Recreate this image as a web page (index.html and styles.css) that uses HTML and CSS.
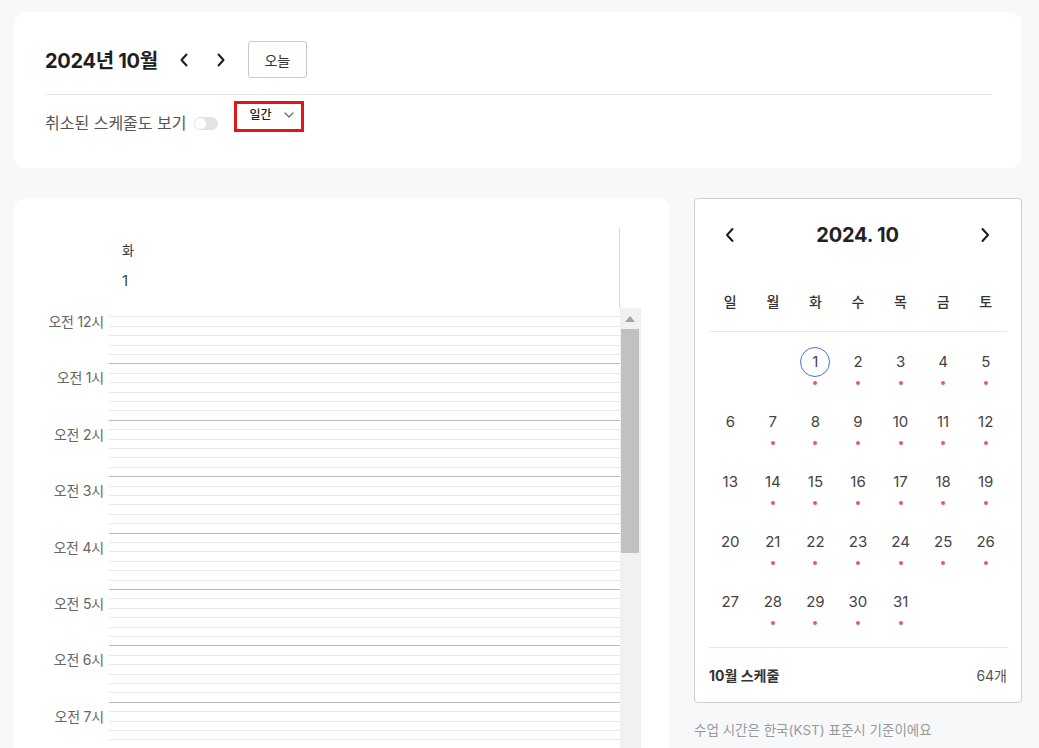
FILE: index.html
```html
<!DOCTYPE html>
<html lang="ko">
<head>
<meta charset="utf-8">
<link rel="stylesheet" href="styles.css">
</head>
<body>
<div class="page">
  <section class="topcard">
    <div class="title-row">
      <h1 class="title">2024년 10월</h1>
      <button class="chev chev-first"><svg width="10" height="14" viewBox="0 0 10 14"><path d="M7.5 1.5 L2.5 7 L7.5 12.5" fill="none" stroke="#1c1c1c" stroke-width="2" stroke-linecap="round" stroke-linejoin="round"/></svg></button>
      <button class="chev"><svg width="10" height="14" viewBox="0 0 10 14"><path d="M2.5 1.5 L7.5 7 L2.5 12.5" fill="none" stroke="#1c1c1c" stroke-width="2" stroke-linecap="round" stroke-linejoin="round"/></svg></button>
      <button class="today">오늘</button>
    </div>
    <div class="filter-row">
      <span class="cancel-label">취소된 스케줄도 보기</span>
      <span class="toggle"><span class="knob"></span></span>
      <div class="view-select">
        <span>일간</span>
        <svg width="10" height="6" viewBox="0 0 10 6"><path d="M1 1 L5 5 L9 1" fill="none" stroke="#666" stroke-width="1.2" stroke-linecap="round" stroke-linejoin="round"/></svg>
      </div>
    </div>
  </section>

  <div class="main">
    <section class="daycard">
      <div class="day-head">
        <div class="gutter"></div>
        <div class="day-col">
          <div class="dow">화</div>
          <div class="dnum">1</div>
        </div>
      </div>
      <div class="day-body">
        <div class="timeline">
          <div class="hour"><div class="hlabel">오전 12시</div><div class="slots"><i></i><i></i><i></i><i></i><i></i><i></i></div></div>
          <div class="hour"><div class="hlabel">오전 1시</div><div class="slots"><i></i><i></i><i></i><i></i><i></i><i></i></div></div>
          <div class="hour"><div class="hlabel">오전 2시</div><div class="slots"><i></i><i></i><i></i><i></i><i></i><i></i></div></div>
          <div class="hour"><div class="hlabel">오전 3시</div><div class="slots"><i></i><i></i><i></i><i></i><i></i><i></i></div></div>
          <div class="hour"><div class="hlabel">오전 4시</div><div class="slots"><i></i><i></i><i></i><i></i><i></i><i></i></div></div>
          <div class="hour"><div class="hlabel">오전 5시</div><div class="slots"><i></i><i></i><i></i><i></i><i></i><i></i></div></div>
          <div class="hour"><div class="hlabel">오전 6시</div><div class="slots"><i></i><i></i><i></i><i></i><i></i><i></i></div></div>
          <div class="hour"><div class="hlabel">오전 7시</div><div class="slots"><i></i><i></i><i></i><i></i><i></i><i></i></div></div>
        </div>
        <div class="sbar">
          <div class="sbar-up"><svg width="10" height="6" viewBox="0 0 10 6"><path d="M0 6 L5 0 L10 6 Z" fill="#a3a3a3"/></svg></div>
          <div class="sbar-thumb"></div>
        </div>
      </div>
    </section>

    <aside class="side">
      <section class="calcard">
        <div class="cal-head">
          <svg width="12" height="16" viewBox="0 0 12 16"><path d="M8.5 2 L3 8 L8.5 14" fill="none" stroke="#1c1c1c" stroke-width="2" stroke-linecap="round" stroke-linejoin="round"/></svg>
          <div class="cal-title">2024. 10</div>
          <svg width="12" height="16" viewBox="0 0 12 16"><path d="M3.5 2 L9 8 L3.5 14" fill="none" stroke="#1c1c1c" stroke-width="2" stroke-linecap="round" stroke-linejoin="round"/></svg>
        </div>
        <div class="weekdays">
          <span>일</span><span>월</span><span>화</span><span>수</span><span>목</span><span>금</span><span>토</span>
        </div>
        <div class="days">
          <div class="cell"></div><div class="cell"></div>
          <div class="cell"><span class="n today-n">1</span><b class="dot"></b></div>
          <div class="cell"><span class="n">2</span><b class="dot"></b></div>
          <div class="cell"><span class="n">3</span><b class="dot"></b></div>
          <div class="cell"><span class="n">4</span><b class="dot"></b></div>
          <div class="cell"><span class="n">5</span><b class="dot"></b></div>
          <div class="cell"><span class="n">6</span></div>
          <div class="cell"><span class="n">7</span><b class="dot"></b></div>
          <div class="cell"><span class="n">8</span><b class="dot"></b></div>
          <div class="cell"><span class="n">9</span><b class="dot"></b></div>
          <div class="cell"><span class="n">10</span><b class="dot"></b></div>
          <div class="cell"><span class="n">11</span><b class="dot"></b></div>
          <div class="cell"><span class="n">12</span><b class="dot"></b></div>
          <div class="cell"><span class="n">13</span></div>
          <div class="cell"><span class="n">14</span><b class="dot"></b></div>
          <div class="cell"><span class="n">15</span><b class="dot"></b></div>
          <div class="cell"><span class="n">16</span><b class="dot"></b></div>
          <div class="cell"><span class="n">17</span><b class="dot"></b></div>
          <div class="cell"><span class="n">18</span><b class="dot"></b></div>
          <div class="cell"><span class="n">19</span><b class="dot"></b></div>
          <div class="cell"><span class="n">20</span></div>
          <div class="cell"><span class="n">21</span><b class="dot"></b></div>
          <div class="cell"><span class="n">22</span><b class="dot"></b></div>
          <div class="cell"><span class="n">23</span><b class="dot"></b></div>
          <div class="cell"><span class="n">24</span><b class="dot"></b></div>
          <div class="cell"><span class="n">25</span><b class="dot"></b></div>
          <div class="cell"><span class="n">26</span><b class="dot"></b></div>
          <div class="cell"><span class="n">27</span></div>
          <div class="cell"><span class="n">28</span><b class="dot"></b></div>
          <div class="cell"><span class="n">29</span><b class="dot"></b></div>
          <div class="cell"><span class="n">30</span><b class="dot"></b></div>
          <div class="cell"><span class="n">31</span><b class="dot"></b></div>
        </div>
        <div class="cal-foot">
          <span class="foot-l">10월 스케줄</span>
          <span class="foot-r">64개</span>
        </div>
      </section>
      <p class="note">수업 시간은 한국(KST) 표준시 기준이에요</p>
    </aside>
  </div>
</div>
</body>
</html>
```

FILE: styles.css
```css
* { box-sizing: border-box; }
html, body { margin: 0; padding: 0; }
body {
  background: #f7f8fa;
  font-family: Inter, "Noto Sans CJK KR", sans-serif;
  color: #222;
  overflow: hidden;
}
.page {
  height: 748px;
  overflow: hidden;
  padding: 12px 17px 0 14px;
}
button { font-family: inherit; }

.topcard {
  background: #fff;
  border-radius: 12px;
  height: 156px;
  padding: 29px 30px 0 31px;
}
.title-row {
  display: flex;
  align-items: center;
  height: 37px;
}
.title {
  margin: 0;
  font-size: 20px;
  font-weight: 700;
  letter-spacing: -0.3px;
  color: #1f1f1f;
}
.chev {
  width: 24px;
  height: 24px;
  border: 0;
  background: none;
  padding: 0;
  display: flex;
  align-items: center;
  justify-content: center;
  margin-left: 13px;
}
.chev-first { margin-left: 14px; }
.today {
  margin-left: 15px;
  width: 59px;
  height: 37px;
  border: 1px solid #c9c9c9;
  border-radius: 3px;
  background: #fff;
  font-size: 14px;
  color: #333;
}
.filter-row {
  margin-top: 16px;
  border-top: 1px solid #e6e6e6;
  padding-top: 6px;
  display: flex;
  align-items: flex-start;
}
.cancel-label {
  font-size: 16px;
  color: #555;
  line-height: 22px;
  margin-top: 11px;
}
.toggle {
  width: 24px;
  height: 13px;
  border-radius: 7px;
  background: #e3e3e3;
  margin-left: 8px;
  margin-top: 16px;
  display: flex;
  align-items: center;
  padding-left: 1px;
}
.knob {
  width: 11px;
  height: 11px;
  border-radius: 50%;
  background: #fff;
}
.view-select {
  margin-left: 16px;
  width: 70px;
  height: 31px;
  border: 3px solid #e4141b;
  display: flex;
  align-items: center;
  padding-left: 12px;
  gap: 12px;
  font-size: 12px;
  font-weight: 500;
  color: #222;
}
.view-select span { line-height: 14px; margin-top: -4px; }
.view-select svg { margin-top: -3px; }

.main {
  margin-top: 30px;
  display: flex;
  gap: 24px;
  align-items: flex-start;
}
.daycard {
  width: 656px;
  height: 600px;
  background: #fff;
  border-radius: 12px;
  padding: 30px 29px 0 0;
}
.day-head {
  display: flex;
  height: 80px;
}
.gutter { width: 95px; }
.day-col {
  width: 511px;
  border-right: 1px solid #d8d8d8;
  padding: 13px 0 0 13px;
}
.dow { font-size: 13px; color: #333; line-height: 18px; }
.dnum { font-size: 15px; color: #444; line-height: 20px; margin-top: 12px; }
.day-body {
  display: flex;
}
.timeline { width: 606px; }
.hour {
  display: flex;
  height: 56.4px;
}
.hlabel {
  width: 95px;
  text-align: right;
  padding: 6px 5px 0 0;
  font-size: 14px;
  line-height: 16px;
  color: #666;
  letter-spacing: -0.2px;
}
.slots { width: 511px; display: flex; flex-direction: column; }
.slots i {
  display: block;
  height: 9.4px;
  border-bottom: 1px solid #e8e8e8;
}
.slots i:last-child { border-bottom-color: #b9b9b9; }
.sbar {
  width: 21px;
  background: #f1f1f1;
  padding: 0 2px 0 1px;
  height: 460px;
}
.sbar-up {
  height: 21px;
  display: flex;
  align-items: center;
  justify-content: center;
}
.sbar-thumb {
  height: 224px;
  background: #c1c1c1;
}

.side { width: 328px; }
.calcard {
  background: #fff;
  border: 1px solid #cfcfcf;
  border-radius: 4px;
  padding: 0 14px;
}
.cal-head {
  height: 71px;
  display: flex;
  align-items: center;
  justify-content: space-between;
  padding: 0 16px 0 15px;
}
.cal-title {
  font-size: 20px;
  font-weight: 700;
  color: #222;
  letter-spacing: -0.2px;
}
.weekdays {
  height: 62px;
  display: grid;
  grid-template-columns: repeat(7, 1fr);
  align-items: center;
  text-align: center;
  border-bottom: 1px solid #e6e6e6;
  font-size: 14px;
  font-weight: 500;
  color: #333;
}
.days {
  display: grid;
  grid-template-columns: repeat(7, 1fr);
  grid-auto-rows: 60px;
  padding-bottom: 15px;
  border-bottom: 1px solid #e6e6e6;
}
.cell {
  display: flex;
  flex-direction: column;
  align-items: center;
  padding-top: 15px;
}
.n {
  width: 30px;
  height: 30px;
  line-height: 30px;
  text-align: center;
  font-size: 15px;
  color: #444;
  border-radius: 50%;
}
.today-n { border: 1px solid #4b6fd6; line-height: 28px; }
.dot {
  width: 4px;
  height: 4px;
  border-radius: 50%;
  background: #ee5a5a;
  margin-top: 4px;
}
.cal-foot {
  height: 54px;
  display: flex;
  align-items: center;
  justify-content: space-between;
  font-size: 14px;
}
.foot-l { font-weight: 700; color: #333; }
.foot-r { color: #555; }
.note {
  margin: 18px 0 0;
  font-size: 13.5px;
  line-height: 18px;
  color: #999;
}
```
